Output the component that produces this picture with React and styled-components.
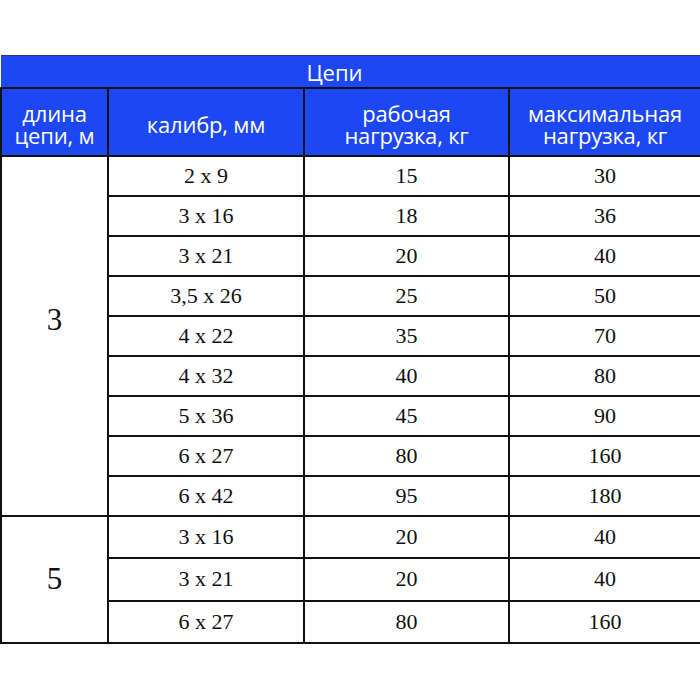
import React from "react";
import styled, { createGlobalStyle } from "styled-components";

const blue = "#1d47f3";
const line = "#111";

const groups = [
  {
    length: "3",
    rowHeight: 40,
    shift: 32,
    rows: [
      ["2 x 9", "15", "30"],
      ["3 x 16", "18", "36"],
      ["3 x 21", "20", "40"],
      ["3,5 x 26", "25", "50"],
      ["4 x 22", "35", "70"],
      ["4 x 32", "40", "80"],
      ["5 x 36", "45", "90"],
      ["6 x 27", "80", "160"],
      ["6 x 42", "95", "180"],
    ],
  },
  {
    length: "5",
    rowHeight: 42.3,
    shift: 0,
    rows: [
      ["3 x 16", "20", "40"],
      ["3 x 21", "20", "40"],
      ["6 x 27", "80", "160"],
    ],
  },
];

const App = () => {
  return (
    <>
      <GlobalStyle />
      <Page>
        <Table>
          <colgroup>
            <col style={{ width: 107 }} />
            <col style={{ width: 196 }} />
            <col style={{ width: 205 }} />
            <col />
          </colgroup>
          <thead>
            <tr>
              <Title colSpan={4}>Цепи</Title>
            </tr>
            <HeadRow>
              <Head>
                длина
                <br />
                цепи, м
              </Head>
              <Head>калибр, мм</Head>
              <Head>
                рабочая
                <br />
                нагрузка, кг
              </Head>
              <Head>
                максимальная
                <br />
                нагрузка, кг
              </Head>
            </HeadRow>
          </thead>
          <tbody>
            {groups.map((group) =>
              group.rows.map((row, i) => (
                <Row key={group.length + i} $height={group.rowHeight}>
                  {i === 0 && (
                    <Length rowSpan={group.rows.length} $shift={group.shift}>
                      {group.length}
                    </Length>
                  )}
                  {row.map((value, j) => (
                    <Cell key={j}>{value}</Cell>
                  ))}
                </Row>
              ))
            )}
          </tbody>
        </Table>
      </Page>
    </>
  );
};

const GlobalStyle = createGlobalStyle`
  html, body {
    margin: 0;
    background: #fff;
    overflow: hidden;
  }
`;

const Page = styled.div`
  width: 700px;
  height: 700px;
  padding-top: 55px;
  box-sizing: border-box;
`;

const Table = styled.table`
  width: 700px;
  border-collapse: collapse;
  table-layout: fixed;
  font-family: "Liberation Serif", "Times New Roman", serif;
  color: #111;

  td,
  th {
    padding: 0;
    text-align: center;
    vertical-align: middle;
    border: 2px solid ${line};
  }

  td:last-child,
  th:last-child {
    border-right: none;
  }
`;

const Title = styled.th`
  height: 31px;
  background: ${blue};
  color: #fff;
  font-family: "Open Sans", "Noto Sans", sans-serif;
  font-weight: 400;
  font-size: 22px;
  line-height: 24px;
  padding-right: 32px !important;
  border-top: 1px solid #2a3a8a !important;
  border-left: none !important;
`;

const HeadRow = styled.tr`
  height: 68px;
`;

const Head = styled.th`
  background: ${blue};
  color: #fff;
  font-family: "Open Sans", "Noto Sans", sans-serif;
  font-weight: 400;
  font-size: 22px;
  line-height: 22px;
  letter-spacing: -0.2px;
  padding-top: 4px !important;
`;

const Row = styled.tr`
  height: ${(p) => p.$height}px;
`;

const Cell = styled.td`
  font-size: 22px;
`;

const Length = styled.td`
  font-size: 31px;
  padding-bottom: ${(p) => p.$shift}px !important;
`;

export default App;
